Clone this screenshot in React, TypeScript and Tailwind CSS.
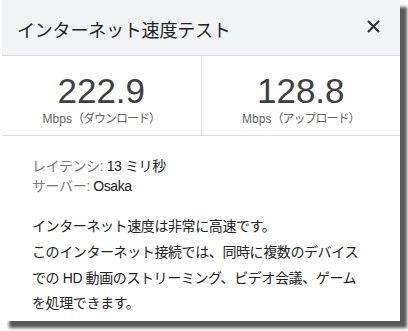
const font = { fontFamily: '"Liberation Sans", "Noto Sans CJK JP", sans-serif' };

const Stat = ({ value, label }: { value: string; label: string }) => {
  return (
    <div className="flex flex-1 flex-col items-center pt-[17px]">
      <div className="text-[35px] leading-[36px] text-[#3c4043]">{value}</div>
      <div className="mt-[2px] text-[12px] leading-[16px] text-[#666]">
        Mbps<span className="tracking-[-1px]">（{label}）</span>
      </div>
    </div>
  );
};

const App = () => {
  return (
    <div className="h-[331px] w-[408px] bg-white" style={font}>
      <div className="ml-[2px] h-[321px] w-[398px] bg-white shadow-[7px_7px_3px_rgba(0,0,0,0.65)]">
        <header className="flex h-[56px] items-start justify-between border-b border-[#dadce0] bg-[#f1f3f4]">
          <h1 className="pl-[15px] pt-[19px] text-[18px] leading-[24px] tracking-[-0.2px] text-[#222]">
            インターネット速度テスト
          </h1>
          <svg
            className="mr-[20px] mt-[20px]"
            width="13"
            height="13"
            viewBox="0 0 13 13"
            fill="none"
            stroke="#333"
            strokeWidth="2.2"
          >
            <path d="M1 1 L12 12 M12 1 L1 12" />
          </svg>
        </header>
        <div className="flex h-[80px] border-b border-[#dadce0]">
          <Stat value="222.9" label="ダウンロード" />
          <div className="w-px bg-[#dadce0]" />
          <Stat value="128.8" label="アップロード" />
        </div>
        <div className="pl-[30px] pr-[36px] pt-[20px] text-[14px] tracking-[-0.4px] text-[#222]">
          <div className="leading-[20px]">
            <span className="text-[#777]">レイテンシ:</span> 13 ミリ秒
          </div>
          <div className="leading-[20px]">
            <span className="text-[#777]">サーバー:</span> Osaka
          </div>
          <p className="mt-[20px] leading-[20px]">インターネット速度は非常に高速です。</p>
          <p className="mt-[4px] leading-[25.5px]">
            このインターネット接続では、同時に複数のデバイスでの HD 動画のストリーミング、ビデオ会議、ゲームを処理できます。
          </p>
        </div>
      </div>
    </div>
  );
};

export default App;
